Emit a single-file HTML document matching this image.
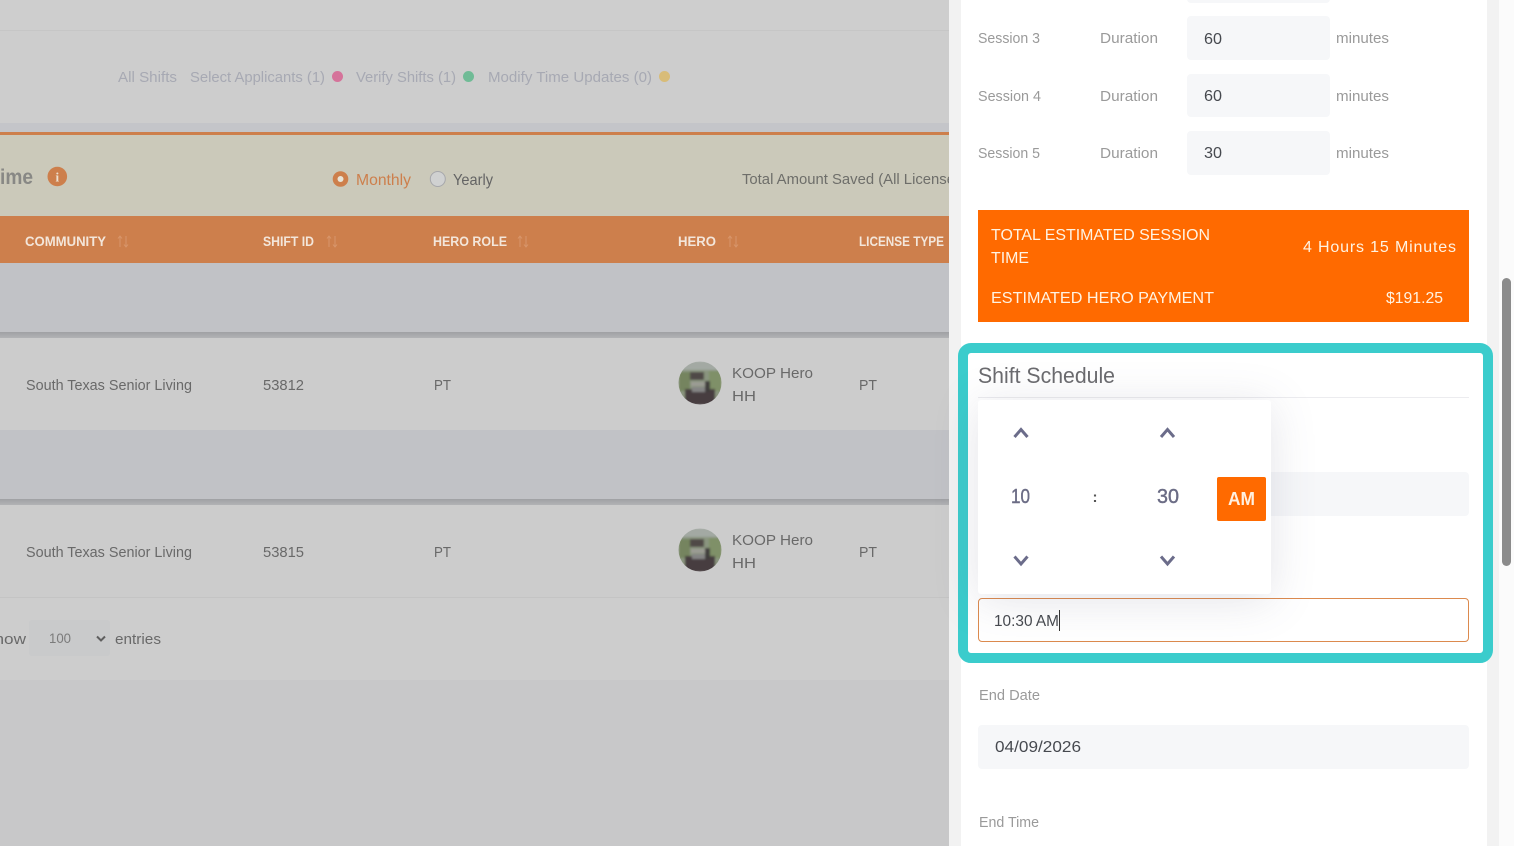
<!DOCTYPE html>
<html><head><meta charset="utf-8"><style>
html,body{margin:0;padding:0;width:1514px;height:846px;overflow:hidden;background:#c8c8c9}
div{position:absolute}
svg{position:absolute;left:0;top:0}
text{font-family:"Liberation Sans",sans-serif}
</style></head><body>
<div style="left:0;top:0;width:949px;height:30px;background:#cecece"></div>
<div style="left:0;top:30px;width:949px;height:1px;background:#c6c6c6"></div>
<div style="left:0;top:31px;width:949px;height:92px;background:#cdcdcd"></div>
<div style="left:0;top:123px;width:949px;height:9px;background:#c4c5c9"></div>
<div style="left:0;top:132px;width:949px;height:3px;background:#cd7f4c"></div>
<div style="left:0;top:135px;width:949px;height:81px;background:#cbc9ba"></div>
<div style="left:0;top:216px;width:949px;height:47px;background:#cd7f4c"></div>
<div style="left:0;top:263px;width:949px;height:69px;background:#c1c2c6"></div>
<div style="left:0;top:332px;width:949px;height:6px;background:linear-gradient(#a0a1a4,#b2b3b5)"></div>
<div style="left:0;top:338px;width:949px;height:92px;background:#cccccc"></div>
<div style="left:0;top:430px;width:949px;height:69px;background:#c1c2c6"></div>
<div style="left:0;top:499px;width:949px;height:6px;background:linear-gradient(#a0a1a4,#b2b3b5)"></div>
<div style="left:0;top:505px;width:949px;height:92px;background:#cccccc"></div>
<div style="left:0;top:597px;width:949px;height:1px;background:#c4c4c4"></div>
<div style="left:0;top:598px;width:949px;height:82px;background:#cdcdcd"></div>
<div style="left:29px;top:620px;width:81px;height:36px;background:#c9cacb;border-radius:3px"></div>

<svg width="949" height="846" viewBox="0 0 949 846">
<g font-size="15" fill="#a7a9b3">
<text x="118" y="82" textLength="59" lengthAdjust="spacingAndGlyphs">All Shifts</text>
<text x="190" y="82" textLength="135" lengthAdjust="spacingAndGlyphs">Select Applicants (1)</text>
<text x="356" y="82" textLength="100" lengthAdjust="spacingAndGlyphs">Verify Shifts (1)</text>
<text x="488" y="82" textLength="164" lengthAdjust="spacingAndGlyphs">Modify Time Updates (0)</text>
</g>
<circle cx="337.500" cy="76.500" r="5.500" fill="#d5739a"/>
<circle cx="468.500" cy="76.500" r="5.500" fill="#70bb96"/>
<circle cx="664.500" cy="76.500" r="5.500" fill="#d8bc78"/>

<text x="0" y="184" font-size="21" font-weight="bold" fill="#888885" textLength="33" lengthAdjust="spacingAndGlyphs">ime</text>
<circle cx="57.300" cy="176.500" r="9.800" fill="#cd7f4c"/>
<text x="57.300" y="181.500" font-size="13" font-weight="bold" fill="#ece0d0" text-anchor="middle" style="font-family:'Liberation Serif',serif">i</text>
<circle cx="340.500" cy="179" r="7.800" fill="#cd7f4c"/>
<circle cx="340.500" cy="179" r="3" fill="#e8e4d8"/>
<text x="356" y="185" font-size="16" fill="#cd7f4c" textLength="55" lengthAdjust="spacingAndGlyphs">Monthly</text>
<circle cx="437.800" cy="179" r="7.500" fill="#d0d1d1" stroke="#a6a7ab" stroke-width="1"/>
<text x="453" y="185" font-size="16" fill="#646464" textLength="40" lengthAdjust="spacingAndGlyphs">Yearly</text>
<text x="742" y="184" font-size="15" fill="#6e6e6a" textLength="213" lengthAdjust="spacingAndGlyphs">Total Amount Saved (All License</text>

<g font-size="13.500" font-weight="bold" fill="#f3e6da">
<text x="25" y="246" textLength="81" lengthAdjust="spacingAndGlyphs">COMMUNITY</text>
<text x="263" y="246" textLength="51" lengthAdjust="spacingAndGlyphs">SHIFT ID</text>
<text x="433" y="246" textLength="74" lengthAdjust="spacingAndGlyphs">HERO ROLE</text>
<text x="678" y="246" textLength="38" lengthAdjust="spacingAndGlyphs">HERO</text>
<text x="859" y="246" textLength="85" lengthAdjust="spacingAndGlyphs">LICENSE TYPE</text>
</g>
<g stroke="#d8966c" stroke-width="1" fill="none">
<path d="M120 247V236M118 238.500L120 236L122 238.500M126 236V247M124 244.500L126 247L128 244.500"/>
<path d="M329 247V236M327 238.500L329 236L331 238.500M335 236V247M333 244.500L335 247L337 244.500"/>
<path d="M520 247V236M518 238.500L520 236L522 238.500M526 236V247M524 244.500L526 247L528 244.500"/>
<path d="M730 247V236M728 238.500L730 236L732 238.500M736 236V247M734 244.500L736 247L738 244.500"/>
</g>

<g font-size="15" fill="#696969">
<text x="26" y="390" textLength="166" lengthAdjust="spacingAndGlyphs">South Texas Senior Living</text>
<text x="263" y="390" textLength="41" lengthAdjust="spacingAndGlyphs">53812</text>
<text x="434" y="390" textLength="17" lengthAdjust="spacingAndGlyphs">PT</text>
<text x="732" y="378" textLength="81" lengthAdjust="spacingAndGlyphs">KOOP Hero</text>
<text x="732" y="401" textLength="24" lengthAdjust="spacingAndGlyphs">HH</text>
<text x="859" y="390" textLength="18" lengthAdjust="spacingAndGlyphs">PT</text>
<text x="26" y="557" textLength="166" lengthAdjust="spacingAndGlyphs">South Texas Senior Living</text>
<text x="263" y="557" textLength="41" lengthAdjust="spacingAndGlyphs">53815</text>
<text x="434" y="557" textLength="17" lengthAdjust="spacingAndGlyphs">PT</text>
<text x="732" y="545" textLength="81" lengthAdjust="spacingAndGlyphs">KOOP Hero</text>
<text x="732" y="568" textLength="24" lengthAdjust="spacingAndGlyphs">HH</text>
<text x="859" y="557" textLength="18" lengthAdjust="spacingAndGlyphs">PT</text>
<text x="-17" y="644" textLength="43" lengthAdjust="spacingAndGlyphs">Show</text>
<text x="115" y="644" textLength="46" lengthAdjust="spacingAndGlyphs">entries</text>
<text x="49" y="643" font-size="14" fill="#7b7b7b" textLength="22" lengthAdjust="spacingAndGlyphs">100</text>
</g>
<path d="M97 636.500L101 640.500L105 636.500" fill="none" stroke="#5f5f5f" stroke-width="2"/>

<defs>
<clipPath id="av"><circle cx="0" cy="0" r="21.500"/></clipPath>
<filter id="sf" x="-10%" y="-10%" width="120%" height="120%"><feGaussianBlur stdDeviation="1.100"/></filter>
<g id="face">
<rect x="-22" y="-22" width="44" height="44" fill="#8a957f"/>
<rect x="-22" y="-22" width="44" height="9" fill="#a3a9a3"/>
<rect x="-21" y="-11" width="11" height="19" fill="#74845f"/>
<rect x="9" y="-12" width="13" height="20" fill="#7f9068"/>
<rect x="-10" y="-11" width="14" height="8" fill="#4f4a46"/>
<rect x="-9" y="-1" width="15" height="4" fill="#9c9c94"/>
<rect x="-15" y="6" width="30" height="16" fill="#463e40"/>
<rect x="-8" y="4" width="14" height="5" fill="#858585"/>
<rect x="5" y="-2" width="5" height="11" fill="#3f3c3c"/>
</g>
</defs>
<g transform="translate(700,383)" clip-path="url(#av)"><use href="#face" filter="url(#sf)"/></g>
<g transform="translate(700,550)" clip-path="url(#av)"><use href="#face" filter="url(#sf)"/></g>
</svg>

<div style="left:949px;top:0;width:12px;height:846px;background:#f2f2f2"></div>
<div style="left:961px;top:0;width:526px;height:846px;background:#fff"></div>
<div style="left:1487px;top:0;width:12px;height:846px;background:#f2f2f2"></div>
<div style="left:1499px;top:0;width:15px;height:846px;background:#fbfbfb"></div>
<div style="left:1502px;top:278px;width:9px;height:288px;background:#8b8b8b;border-radius:5px"></div>

<div style="left:1187px;top:-41px;width:143px;height:44px;background:#f6f7f9;border-radius:4px"></div>
<div style="left:1187px;top:16px;width:143px;height:44px;background:#f6f7f9;border-radius:4px"></div>
<div style="left:1187px;top:74px;width:143px;height:43px;background:#f6f7f9;border-radius:4px"></div>
<div style="left:1187px;top:131px;width:143px;height:44px;background:#f6f7f9;border-radius:4px"></div>
<div style="left:978px;top:210px;width:491px;height:112px;background:#ff6a00"></div>

<div style="left:958px;top:343px;width:515px;height:300px;border:10px solid #3bcccc;border-radius:13px;background:#fff"></div>
<div style="left:978px;top:397px;width:491px;height:1px;background:#ececef"></div>
<div style="left:1200px;top:472px;width:269px;height:44px;background:#f6f7f9;border-radius:4px"></div>
<div style="left:978px;top:598px;width:489px;height:42px;border:1px solid #dc8a4e;border-radius:4px;background:#fff"></div>
<div style="left:978px;top:400px;width:293px;height:194px;background:#fff;border-radius:3px;box-shadow:0 6px 45px rgba(90,90,120,.17)"></div>
<div style="left:1217px;top:477px;width:49px;height:44px;background:#ff6a00;border-radius:2px"></div>
<div style="left:978px;top:725px;width:491px;height:44px;background:#f6f7f9;border-radius:4px"></div>

<svg width="1514" height="846" viewBox="0 0 1514 846">
<g font-size="15" fill="#9a9a9a">
<text x="978" y="43" textLength="62" lengthAdjust="spacingAndGlyphs">Session 3</text>
<text x="1100" y="43" textLength="58" lengthAdjust="spacingAndGlyphs">Duration</text>
<text x="1336" y="43" textLength="53" lengthAdjust="spacingAndGlyphs">minutes</text>
<text x="978" y="101" textLength="63" lengthAdjust="spacingAndGlyphs">Session 4</text>
<text x="1100" y="101" textLength="58" lengthAdjust="spacingAndGlyphs">Duration</text>
<text x="1336" y="101" textLength="53" lengthAdjust="spacingAndGlyphs">minutes</text>
<text x="978" y="158" textLength="62" lengthAdjust="spacingAndGlyphs">Session 5</text>
<text x="1100" y="158" textLength="58" lengthAdjust="spacingAndGlyphs">Duration</text>
<text x="1336" y="158" textLength="53" lengthAdjust="spacingAndGlyphs">minutes</text>
<text x="979" y="700" textLength="61" lengthAdjust="spacingAndGlyphs">End Date</text>
<text x="979" y="827" textLength="60" lengthAdjust="spacingAndGlyphs">End Time</text>
</g>
<g font-size="16" fill="#46494f">
<text x="1204" y="44" textLength="18" lengthAdjust="spacingAndGlyphs">60</text>
<text x="1204" y="101" textLength="18" lengthAdjust="spacingAndGlyphs">60</text>
<text x="1204" y="158" textLength="18" lengthAdjust="spacingAndGlyphs">30</text>
<text x="995" y="752" textLength="86" lengthAdjust="spacingAndGlyphs">04/09/2026</text>
<text x="994" y="626" textLength="65" lengthAdjust="spacingAndGlyphs">10:30 AM</text>
</g>
<rect x="1059" y="610" width="1" height="21" fill="#333"/>
<g font-size="16" fill="#fff3e2">
<text x="991" y="240" textLength="219" lengthAdjust="spacingAndGlyphs">TOTAL ESTIMATED SESSION</text>
<text x="991" y="263" textLength="38" lengthAdjust="spacingAndGlyphs">TIME</text>
<text x="1303" y="252" textLength="153" lengthAdjust="spacing">4 Hours 15 Minutes</text>
<text x="991" y="303" textLength="223" lengthAdjust="spacingAndGlyphs">ESTIMATED HERO PAYMENT</text>
<text x="1386" y="303" textLength="57" lengthAdjust="spacingAndGlyphs">$191.25</text>
</g>
<text x="978" y="383" font-size="22" fill="#6a6a6e" textLength="137" lengthAdjust="spacingAndGlyphs">Shift Schedule</text>
<g fill="none" stroke="#6b6c8a" stroke-width="3">
<path d="M1014.500 437L1021 429.500L1027.500 437"/>
<path d="M1161 437L1167.500 429.500L1174 437"/>
<path d="M1014.500 556.500L1021 564L1027.500 556.500"/>
<path d="M1161 556.500L1167.500 564L1174 556.500"/>
</g>
<g font-size="20" fill="#6b6c85" stroke="#6b6c85" stroke-width=".4">
<text x="1011" y="503" textLength="19" lengthAdjust="spacingAndGlyphs">10</text>
<text x="1157" y="503" textLength="22" lengthAdjust="spacingAndGlyphs">30</text>
</g>
<text x="1095" y="502" font-size="15" font-weight="bold" fill="#555" text-anchor="middle">:</text>
<text x="1228" y="505" font-size="18" font-weight="bold" fill="#fff0e0" textLength="27" lengthAdjust="spacingAndGlyphs">AM</text>
</svg>
</body></html>
